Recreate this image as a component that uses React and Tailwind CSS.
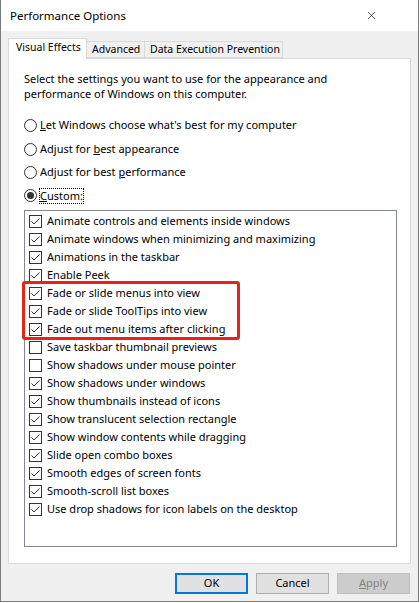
import { X } from "lucide-react";

const effects = [
  { label: "Animate controls and elements inside windows", on: true },
  { label: "Animate windows when minimizing and maximizing", on: true },
  { label: "Animations in the taskbar", on: true },
  { label: "Enable Peek", on: true },
  { label: "Fade or slide menus into view", on: true },
  { label: "Fade or slide ToolTips into view", on: true },
  { label: "Fade out menu items after clicking", on: true },
  { label: "Save taskbar thumbnail previews", on: false },
  { label: "Show shadows under mouse pointer", on: false },
  { label: "Show shadows under windows", on: true },
  { label: "Show thumbnails instead of icons", on: true },
  { label: "Show translucent selection rectangle", on: true },
  { label: "Show window contents while dragging", on: true },
  { label: "Slide open combo boxes", on: true },
  { label: "Smooth edges of screen fonts", on: true },
  { label: "Smooth-scroll list boxes", on: true },
  { label: "Use drop shadows for icon labels on the desktop", on: true },
];

function Radio({ checked }) {
  return (
    <span className="flex h-[13px] w-[13px] shrink-0 items-center justify-center rounded-full border border-[#333]">
      {checked && <span className="h-[7px] w-[7px] rounded-full bg-[#333]" />}
    </span>
  );
}

function Checkbox({ checked }) {
  return (
    <span className="flex h-[13px] w-[13px] shrink-0 items-center justify-center border border-[#333] bg-white">
      {checked && (
        <svg width="11" height="11" viewBox="0 0 11 11">
          <path d="M1.5 5.5 L4 8 L9.5 2.5" fill="none" stroke="#333" strokeWidth="1" />
        </svg>
      )}
    </span>
  );
}

export default function App() {
  return (
    <div className="h-[603px] w-[420px] bg-white font-['Noto_Sans',sans-serif] text-[11px] text-black">
      <div className="flex h-[602px] w-[419px] flex-col border-x border-b border-[#7a7a7a] bg-[#f0f0f0]">
        {/* title bar */}
        <div className="flex h-[31px] items-center justify-between bg-white pl-[9px] pr-[40px]">
          <span className="text-[11.5px]">Performance Options</span>
          <X className="h-[13px] w-[13px]" strokeWidth={1.2} color="#000" />
        </div>

        {/* tabs */}
        <div className="mt-[7px] flex items-end whitespace-nowrap pl-[7px] text-[10.5px]">
          <div className="relative z-10 -mb-px flex h-[21px] w-[79px] items-center border border-b-0 border-[#d9d9d9] bg-white pb-[2px] pl-[7px]">
            Visual Effects
          </div>
          <div className="flex h-[17px] w-[58px] items-center border-y border-r border-[#d9d9d9] bg-[#f0f0f0] pl-[5px]">
            Advanced
          </div>
          <div className="flex h-[17px] w-[138px] items-center border-y border-r border-[#d9d9d9] bg-[#f0f0f0] pl-[5px]">
            Data Execution Prevention
          </div>
        </div>

        {/* panel */}
        <div className="ml-[7px] h-[506px] w-[403px] border border-[#d9d9d9] bg-white pl-[15px] pt-[12px]">
          <p className="leading-[15px]">
            Select the settings you want to use for the appearance and
            <br />
            performance of Windows on this computer.
          </p>

          <div className="mt-[13px] flex flex-col">
            <div className="flex h-[23px] items-center gap-[3px]">
              <Radio />
              <span>
                <u>L</u>et Windows choose what's best for my computer
              </span>
            </div>
            <div className="flex h-[24px] items-center gap-[3px]">
              <Radio />
              <span>
                Adjust for <u>b</u>est appearance
              </span>
            </div>
            <div className="flex h-[23px] items-center gap-[3px]">
              <Radio />
              <span>
                Adjust for best <u>p</u>erformance
              </span>
            </div>
            <div className="flex h-[23px] items-center gap-[3px]">
              <Radio checked />
              <span className="outline outline-1 outline-dotted outline-[#000] leading-[14px]">
                <u>C</u>ustom:
              </span>
            </div>
          </div>

          <div className="relative mt-[3px] h-[337px] w-[373px] border border-[#828790] pl-[4px] pt-[1px]">
            {effects.map((e) => (
              <div key={e.label} className="flex h-[18px] items-center gap-[5px]">
                <Checkbox checked={e.on} />
                <span className="whitespace-nowrap">{e.label}</span>
              </div>
            ))}
            <div className="absolute left-[-3px] top-[70px] h-[59px] w-[218px] rounded-[3px] border-[3px] border-[#e8231b]" />
          </div>
        </div>

        {/* buttons */}
        <div className="mt-[9px] flex justify-end gap-[8px] pr-[8px]">
          <button className="h-[21px] w-[73px] border-2 border-[#0078d7] bg-[#e1e1e1] text-[11px]">OK</button>
          <button className="h-[21px] w-[73px] border border-[#adadad] bg-[#e1e1e1] text-[11px]">Cancel</button>
          <button className="h-[21px] w-[73px] border border-[#bfbfbf] bg-[#cccccc] text-[11px] text-[#838383]">
            <u>A</u>pply
          </button>
        </div>
      </div>
    </div>
  );
}
